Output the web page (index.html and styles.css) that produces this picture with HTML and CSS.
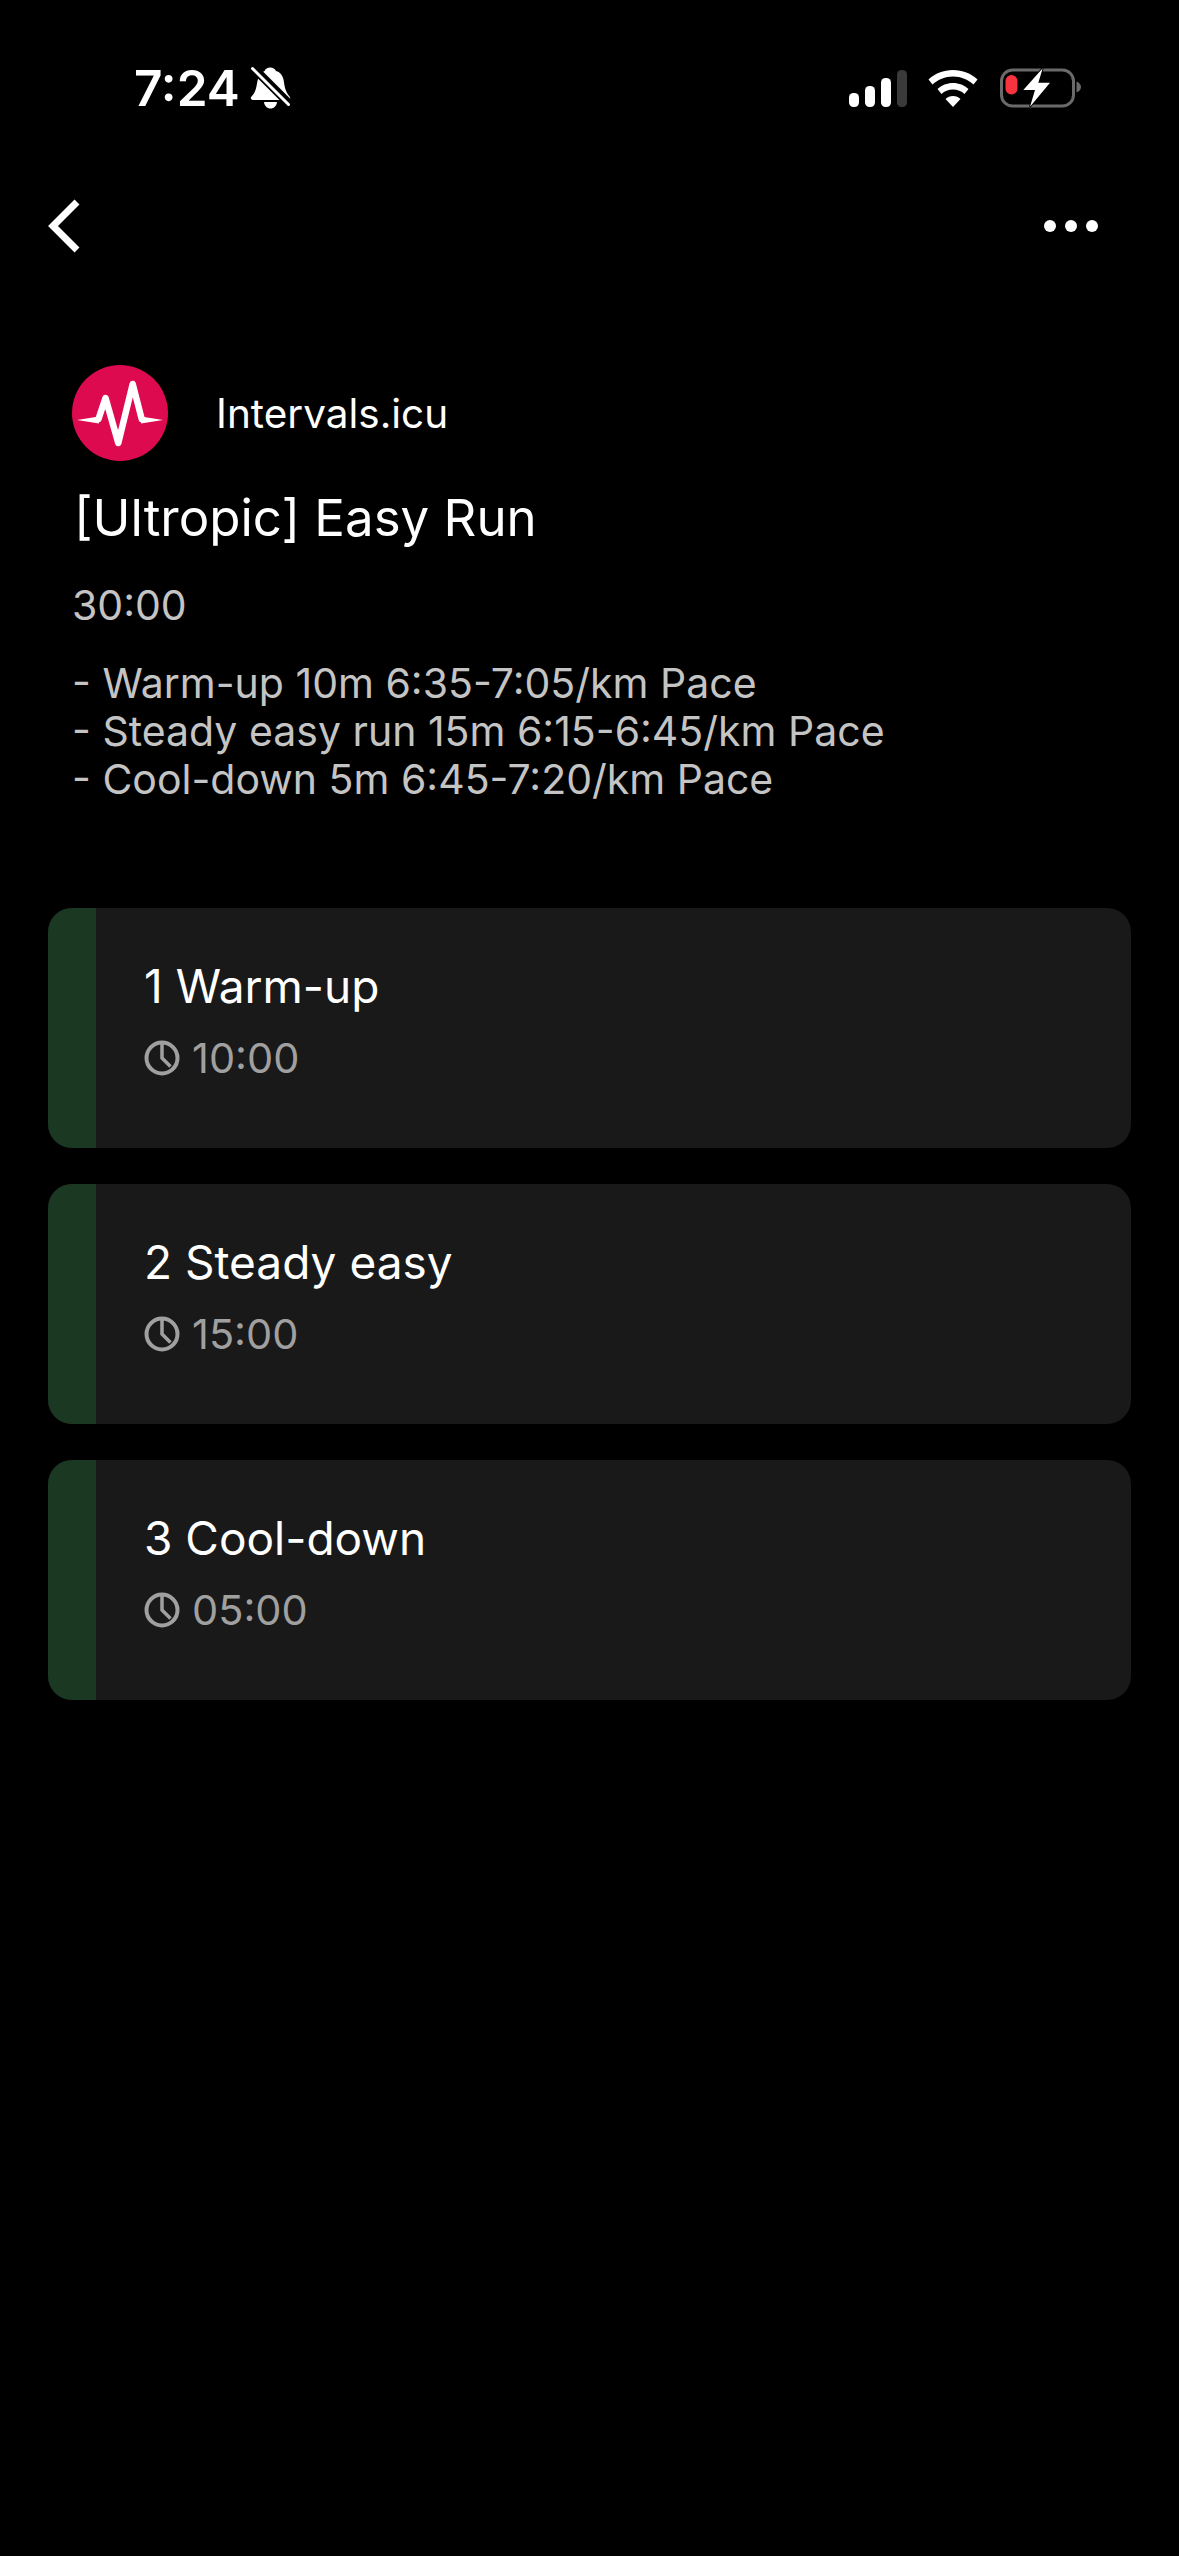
FILE: index.html
```html
<!DOCTYPE html>
<html lang="en">
  <head>
    <meta charset="UTF-8" />
    <title>Easy Run</title>
    <link rel="stylesheet" href="styles.css">
  </head>
  <body>
    <div class="status-bar">
      <div class="status-left">
        <span class="time">7:24</span>
        <svg class="bell" width="42" height="44" viewBox="0 0 42 44">
          <path d="M20 1.500c3 0 5 1.500 6 3.500 4 1 6.500 4 7.500 8.500 1 5 1 11 6 17 1.500 2 .5 3.500-1.500 3.500H3c-2 0-3-2-1.500-3.500 4-4 4.500-8 5.500-13C8 11 11 7 14.500 5c1-2 3-3.500 5.500-3.500z" fill="#fff"/>
          <path d="M14 36h13c-.5 4-3 6.500-6.500 6.500S14.500 40 14 36z" fill="#fff"/>
          <path d="M5 1l36 36" stroke="#000" stroke-width="5"/>
          <path d="M2 4.500l36 36" stroke="#000" stroke-width="3"/>
          <path d="M2.500 2.500l36 36" stroke="#fff" stroke-width="3" stroke-linecap="round"/>
        </svg>
      </div>
      <div class="status-right">
        <svg width="58" height="37" viewBox="0 0 58 37">
          <rect x="0" y="23" width="10" height="14" rx="4.500" fill="#fff"/>
          <rect x="16" y="16" width="10" height="21" rx="4.500" fill="#fff"/>
          <rect x="32" y="8" width="10" height="29" rx="4.500" fill="#fff"/>
          <rect x="48" y="0" width="10" height="37" rx="4.500" fill="#3a3a3a"/>
        </svg>
        <svg class="wifi" width="50" height="37" viewBox="0 0 50 37">
          <path d="M25 0c9.500 0 18 3.500 24.500 9.500l-4 5C40 9.500 33 6.500 25 6.500S10 9.500 4.500 14.500l-4-5C7 3.500 15.500 0 25 0z" fill="#fff"/>
          <path d="M25 13c6 0 11.500 2.200 15.500 6l-4 5c-3-2.800-7-4.500-11.500-4.500S16.500 21.200 13.500 24l-4-5c4-3.800 9.500-6 15.500-6z" fill="#fff"/>
          <path d="M25 26c3 0 5.500 1.100 7.500 3L25 37l-7.500-8c2-1.900 4.500-3 7.500-3z" fill="#fff"/>
        </svg>
        <svg class="battery" width="82" height="40" viewBox="0 0 82 40">
          <rect x="2.500" y="2" width="72" height="36" rx="11" fill="none" stroke="#6a6a6a" stroke-width="3"/>
          <rect x="6.500" y="7" width="12" height="19.500" rx="6" fill="#f6333f"/>
          <path d="M77.500 13.500c3 1 4.500 3.500 4.500 5.500s-1.500 4.500-4.500 5.500z" fill="#6a6a6a"/>
          <path d="M43.700 .3L24.300 22H36L31 38.700 51 14.700H39.300z" fill="#fff" stroke="#000" stroke-width="2" paint-order="stroke"/>
        </svg>
      </div>
    </div>

    <div class="nav-bar">
      <svg width="36" height="56" viewBox="0 0 36 56">
        <path d="M31 4L7 28l24 24" fill="none" stroke="#fff" stroke-width="7"/>
      </svg>
      <div class="more">
        <span></span><span></span><span></span>
      </div>
    </div>

    <div class="summary">
      <div class="source">
        <svg width="96" height="96" viewBox="0 0 96 96">
          <circle cx="48" cy="48" r="48" fill="#de0a4f"/>
          <path d="M5 55l22-3.500v7z" fill="#fff"/>
          <path d="M91 55l-22-3.500v7z" fill="#fff"/>
          <path d="M26.500 54l7-21 12.800 45 14.400-59 9 35" fill="none" stroke="#fff" stroke-width="6.500" stroke-linecap="round" stroke-linejoin="round"/>
        </svg>
        <span class="source-name">Intervals.icu</span>
      </div>
      <h1 class="title">[Ultropic] Easy Run</h1>
      <div class="duration">30:00</div>
      <div class="description">
        <div>- Warm-up 10m 6:35-7:05/km Pace</div>
        <div>- Steady easy run 15m 6:15-6:45/km Pace</div>
        <div>- Cool-down 5m 6:45-7:20/km Pace</div>
      </div>
    </div>

    <div class="steps">
      <div class="step">
        <div class="step-bar"></div>
        <div class="step-body">
          <div class="step-name">1 Warm-up</div>
          <div class="step-time">
            <svg width="36" height="36" viewBox="0 0 36 36"><circle cx="18" cy="18" r="15.500" fill="none" stroke="#a0a0a0" stroke-width="4"/><path d="M18 3v15l8.500 8.500" fill="none" stroke="#a0a0a0" stroke-width="3.500"/></svg>
            <span>10:00</span>
          </div>
        </div>
      </div>
      <div class="step">
        <div class="step-bar"></div>
        <div class="step-body">
          <div class="step-name">2 Steady easy</div>
          <div class="step-time">
            <svg width="36" height="36" viewBox="0 0 36 36"><circle cx="18" cy="18" r="15.500" fill="none" stroke="#a0a0a0" stroke-width="4"/><path d="M18 3v15l8.500 8.500" fill="none" stroke="#a0a0a0" stroke-width="3.500"/></svg>
            <span>15:00</span>
          </div>
        </div>
      </div>
      <div class="step">
        <div class="step-bar"></div>
        <div class="step-body">
          <div class="step-name">3 Cool-down</div>
          <div class="step-time">
            <svg width="36" height="36" viewBox="0 0 36 36"><circle cx="18" cy="18" r="15.500" fill="none" stroke="#a0a0a0" stroke-width="4"/><path d="M18 3v15l8.500 8.500" fill="none" stroke="#a0a0a0" stroke-width="3.500"/></svg>
            <span>05:00</span>
          </div>
        </div>
      </div>
    </div>
  </body>
</html>
```

FILE: styles.css
```css
html {
  background-color: #000;
}
body {
  margin: 0;
  height: 2556px;
  overflow: hidden;
  background-color: #000;
  color: #fff;
  font-family: 'Inter', 'Liberation Sans', sans-serif;
}
svg {
  display: block;
  flex: none;
}
.status-bar {
  display: flex;
  justify-content: space-between;
  align-items: center;
  height: 62px;
  padding: 57px 98px 0 134px;
}
.status-left {
  display: flex;
  align-items: center;
  gap: 10px;
}
.time {
  font-size: 49.5px;
  line-height: 62px;
  font-weight: 600;
}
.status-right {
  display: flex;
  align-items: center;
  gap: 21px;
}
.nav-bar {
  display: flex;
  justify-content: space-between;
  align-items: center;
  height: 56px;
  margin-top: 79px;
  padding: 0 81px 0 46px;
}
.more {
  display: flex;
  gap: 9px;
}
.more span {
  width: 12px;
  height: 12px;
  border-radius: 50%;
  background-color: #fff;
}
.summary {
  padding: 0 72px;
  margin-top: 111px;
}
.source {
  display: flex;
  align-items: center;
  gap: 48px;
}
.source-name {
  font-size: 40.5px;
  font-weight: 400;
}
.title {
  margin: 22px 0 0 2px;
  font-size: 51px;
  line-height: 70px;
  font-weight: 400;
}
.duration {
  margin-top: 28px;
  font-size: 41px;
  line-height: 48px;
  color: #c4c4c4;
}
.description {
  margin-top: 30px;
  font-size: 41px;
  line-height: 48px;
  color: #c4c4c4;
}
.steps {
  display: flex;
  flex-direction: column;
  gap: 36px;
  margin: 105px 48px 0;
}
.step {
  display: flex;
  height: 240px;
  border-radius: 24px;
  overflow: hidden;
  background-color: #191919;
}
.step-bar {
  width: 48px;
  background-color: #1a3822;
}
.step-body {
  padding: 50px 48px 0;
}
.step-name {
  font-size: 46px;
  line-height: 56px;
}
.step-time {
  display: flex;
  align-items: center;
  gap: 12px;
  margin-top: 16px;
  font-size: 41.5px;
  line-height: 56px;
  color: #a0a0a0;
}
```
